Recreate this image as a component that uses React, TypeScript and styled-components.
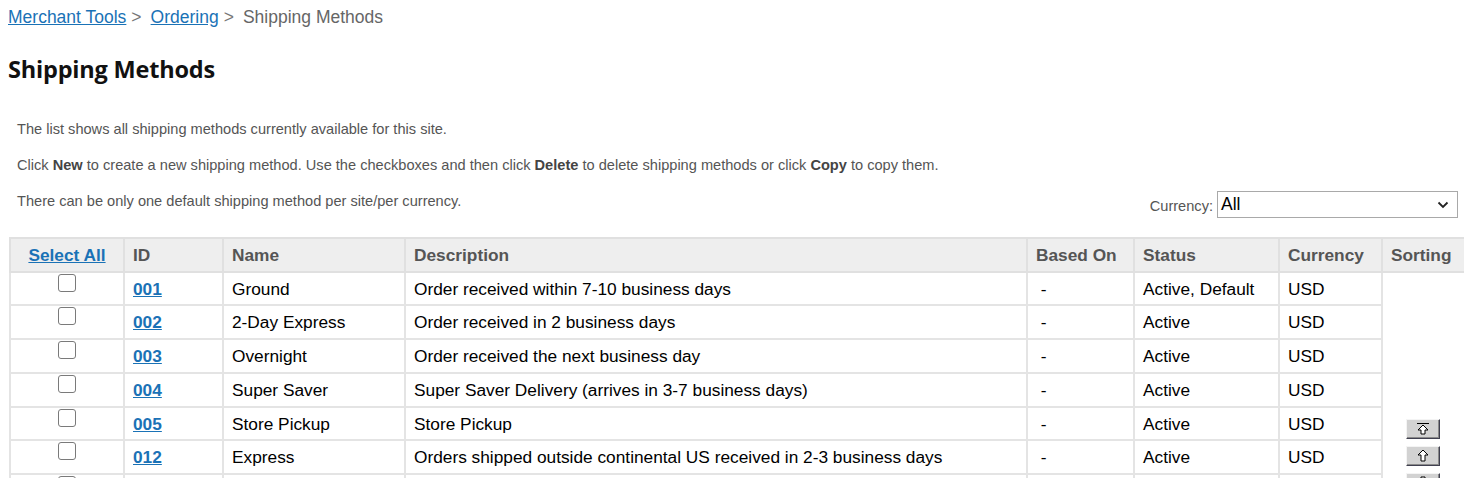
import styled, { createGlobalStyle } from "styled-components";

const GlobalStyle = createGlobalStyle`
  body {
    margin: 8px;
    font-family: "Liberation Sans", Arial, sans-serif;
    background: #fff;
    color: #000;
  }
`;

const Breadcrumb = styled.div`
  font-size: 17.5px;
  line-height: 18px;
  color: #666;
`;
const CrumbLink = styled.a`
  color: #1a72b6;
  text-decoration: underline;
`;
const Sep = styled.span`
  color: #777;
  margin: 0 9px 0 5px;
`;

const Title = styled.h1`
  font-family: "Open Sans", "Noto Sans", sans-serif;
  font-size: 23.5px;
  font-weight: 700;
  color: #111;
  margin: 29px 0 0;
  line-height: 28px;
  letter-spacing: -0.2px;
`;

const Intro = styled.div`
  margin-top: 38px;
  padding-left: 9px;
  font-size: 14.6px;
  color: #555;
  line-height: 17px;
`;
const IntroLine = styled.p`
  margin: 0 0 19px;
`;
const Strong = styled.b`
  color: #444;
`;
const LastRow = styled.div`
  display: flex;
  justify-content: space-between;
  align-items: flex-start;
`;
const CurrencyBox = styled.label`
  display: flex;
  align-items: center;
  gap: 4px;
  margin-top: -2px;
  margin-right: 6px;
  font-size: 14.6px;
  color: #555;
`;
const CurrencyLabel = styled.span`
  margin-top: 3px;
`;
const Select = styled.div`
  width: 241px;
  height: 27px;
  border: 1px solid #a9a9a9;
  display: flex;
  align-items: center;
  justify-content: space-between;
  padding: 0 8px 0 3px;
  box-sizing: border-box;
  font-size: 17.5px;
  color: #000;
`;

const Table = styled.table`
  margin-top: 19px;
  margin-left: 1px;
  width: 1456px;
  border-collapse: collapse;
  table-layout: fixed;
  font-size: 17.3px;
  line-height: 20.7px;
  border: 2px solid #e4e4e4;
`;
const Th = styled.th<{ $center?: boolean }>`
  background: #eeeeee;
  color: #555;
  font-weight: 700;
  text-align: ${(p) => (p.$center ? "center" : "left")};
  padding: 6px 8px 5px;
  border: 2px solid #e0e0e0;
  white-space: nowrap;
`;
const Td = styled.td<{ $center?: boolean }>`
  padding: 6px 8px 5px;
  border: 2px solid #e4e4e4;
  text-align: ${(p) => (p.$center ? "center" : "left")};
  vertical-align: middle;
  white-space: nowrap;
`;
const CheckCell = styled(Td)`
  vertical-align: top;
  padding-top: 1px;
`;
const HeadLink = styled.a`
  color: #1a72b6;
  text-decoration: underline;
`;
const IdLink = styled.a`
  color: #1a72b6;
  font-weight: 700;
  text-decoration: underline;
`;
const Check = styled.span`
  display: inline-block;
  vertical-align: top;
  width: 16px;
  height: 16px;
  border: 1px solid #7a7a7a;
  border-radius: 3px;
  background: #fff;
`;
const SortCell = styled.td`
  border: 2px solid #e4e4e4;
  vertical-align: top;
  padding: 146px 0 0 23px;
`;
const SortButtons = styled.div`
  display: flex;
  flex-direction: column;
  gap: 7px;
`;
const SortButton = styled.button`
  width: 34px;
  height: 20px;
  padding: 0;
  background: #d2d2d2;
  border: 1px solid;
  border-color: #f4f4f4 #404050 #404050 #f4f4f4;
  box-shadow: inset -1px -1px 0 #8a8a8a;
  display: flex;
  align-items: center;
  justify-content: center;
`;

const columns = [114, 99, 182, 622, 107, 145, 103, 84];

const rows = [
  { id: "001", name: "Ground", desc: "Order received within 7-10 business days", status: "Active, Default" },
  { id: "002", name: "2-Day Express", desc: "Order received in 2 business days", status: "Active" },
  { id: "003", name: "Overnight", desc: "Order received the next business day", status: "Active" },
  { id: "004", name: "Super Saver", desc: "Super Saver Delivery (arrives in 3-7 business days)", status: "Active" },
  { id: "005", name: "Store Pickup", desc: "Store Pickup", status: "Active" },
  { id: "012", name: "Express", desc: "Orders shipped outside continental US received in 2-3 business days", status: "Active" },
  { id: "013", name: "Next Day", desc: "Order received the next business day", status: "Active" },
  { id: "014", name: "Freight", desc: "Freight delivery for large items", status: "Active" },
  { id: "015", name: "International", desc: "Orders shipped outside the US", status: "Active" },
];

function Arrow({ top, down }: { top?: boolean; down?: boolean }) {
  return (
    <svg width="14" height="13" viewBox="0 0 14 13" style={down ? { transform: "rotate(180deg)" } : undefined}>
      {top && <line x1="1" y1="1.5" x2="13" y2="1.5" stroke="#000" strokeWidth="1" />}
      <path
        d={top ? "M7 3 L12 8 L9 8 L9 12 L5 12 L5 8 L2 8 Z" : "M7 1 L12 6 L9 6 L9 12 L5 12 L5 6 L2 6 Z"}
        fill="#fff"
        stroke="#000"
        strokeWidth="1"
      />
    </svg>
  );
}

export default function App() {
  return (
    <>
      <GlobalStyle />
      <Breadcrumb>
        <CrumbLink href="#">Merchant Tools</CrumbLink>
        <Sep>&gt;</Sep>
        <CrumbLink href="#">Ordering</CrumbLink>
        <Sep>&gt;</Sep>
        Shipping Methods
      </Breadcrumb>
      <Title>Shipping Methods</Title>
      <Intro>
        <IntroLine>The list shows all shipping methods currently available for this site.</IntroLine>
        <IntroLine>
          Click <Strong>New</Strong> to create a new shipping method. Use the checkboxes and then click{" "}
          <Strong>Delete</Strong> to delete shipping methods or click <Strong>Copy</Strong> to copy them.
        </IntroLine>
        <LastRow>
          <span>There can be only one default shipping method per site/per currency.</span>
          <CurrencyBox>
            <CurrencyLabel>Currency:</CurrencyLabel>
            <Select>
              All
              <svg width="12" height="8" viewBox="0 0 12 8">
                <path d="M1.5 1.5 L6 6 L10.5 1.5" fill="none" stroke="#222" strokeWidth="1.8" />
              </svg>
            </Select>
          </CurrencyBox>
        </LastRow>
      </Intro>
      <Table>
        <colgroup>
          {columns.map((w, i) => (
            <col key={i} style={{ width: w }} />
          ))}
        </colgroup>
        <thead>
          <tr>
            <Th $center>
              <HeadLink href="#">Select All</HeadLink>
            </Th>
            <Th>ID</Th>
            <Th>Name</Th>
            <Th>Description</Th>
            <Th>Based On</Th>
            <Th>Status</Th>
            <Th>Currency</Th>
            <Th>Sorting</Th>
          </tr>
        </thead>
        <tbody>
          {rows.map((r, i) => (
            <tr key={r.id}>
              <CheckCell $center>
                <Check />
              </CheckCell>
              <Td>
                <IdLink href="#">{r.id}</IdLink>
              </Td>
              <Td>{r.name}</Td>
              <Td>{r.desc}</Td>
              <Td>&nbsp;-</Td>
              <Td>{r.status}</Td>
              <Td>USD</Td>
              {i === 0 && (
                <SortCell rowSpan={rows.length}>
                  <SortButtons>
                    <SortButton title="Move to top">
                      <Arrow top />
                    </SortButton>
                    <SortButton title="Move up">
                      <Arrow />
                    </SortButton>
                    <SortButton title="Move down">
                      <Arrow down />
                    </SortButton>
                    <SortButton title="Move to bottom">
                      <Arrow top down />
                    </SortButton>
                  </SortButtons>
                </SortCell>
              )}
            </tr>
          ))}
        </tbody>
      </Table>
    </>
  );
}
